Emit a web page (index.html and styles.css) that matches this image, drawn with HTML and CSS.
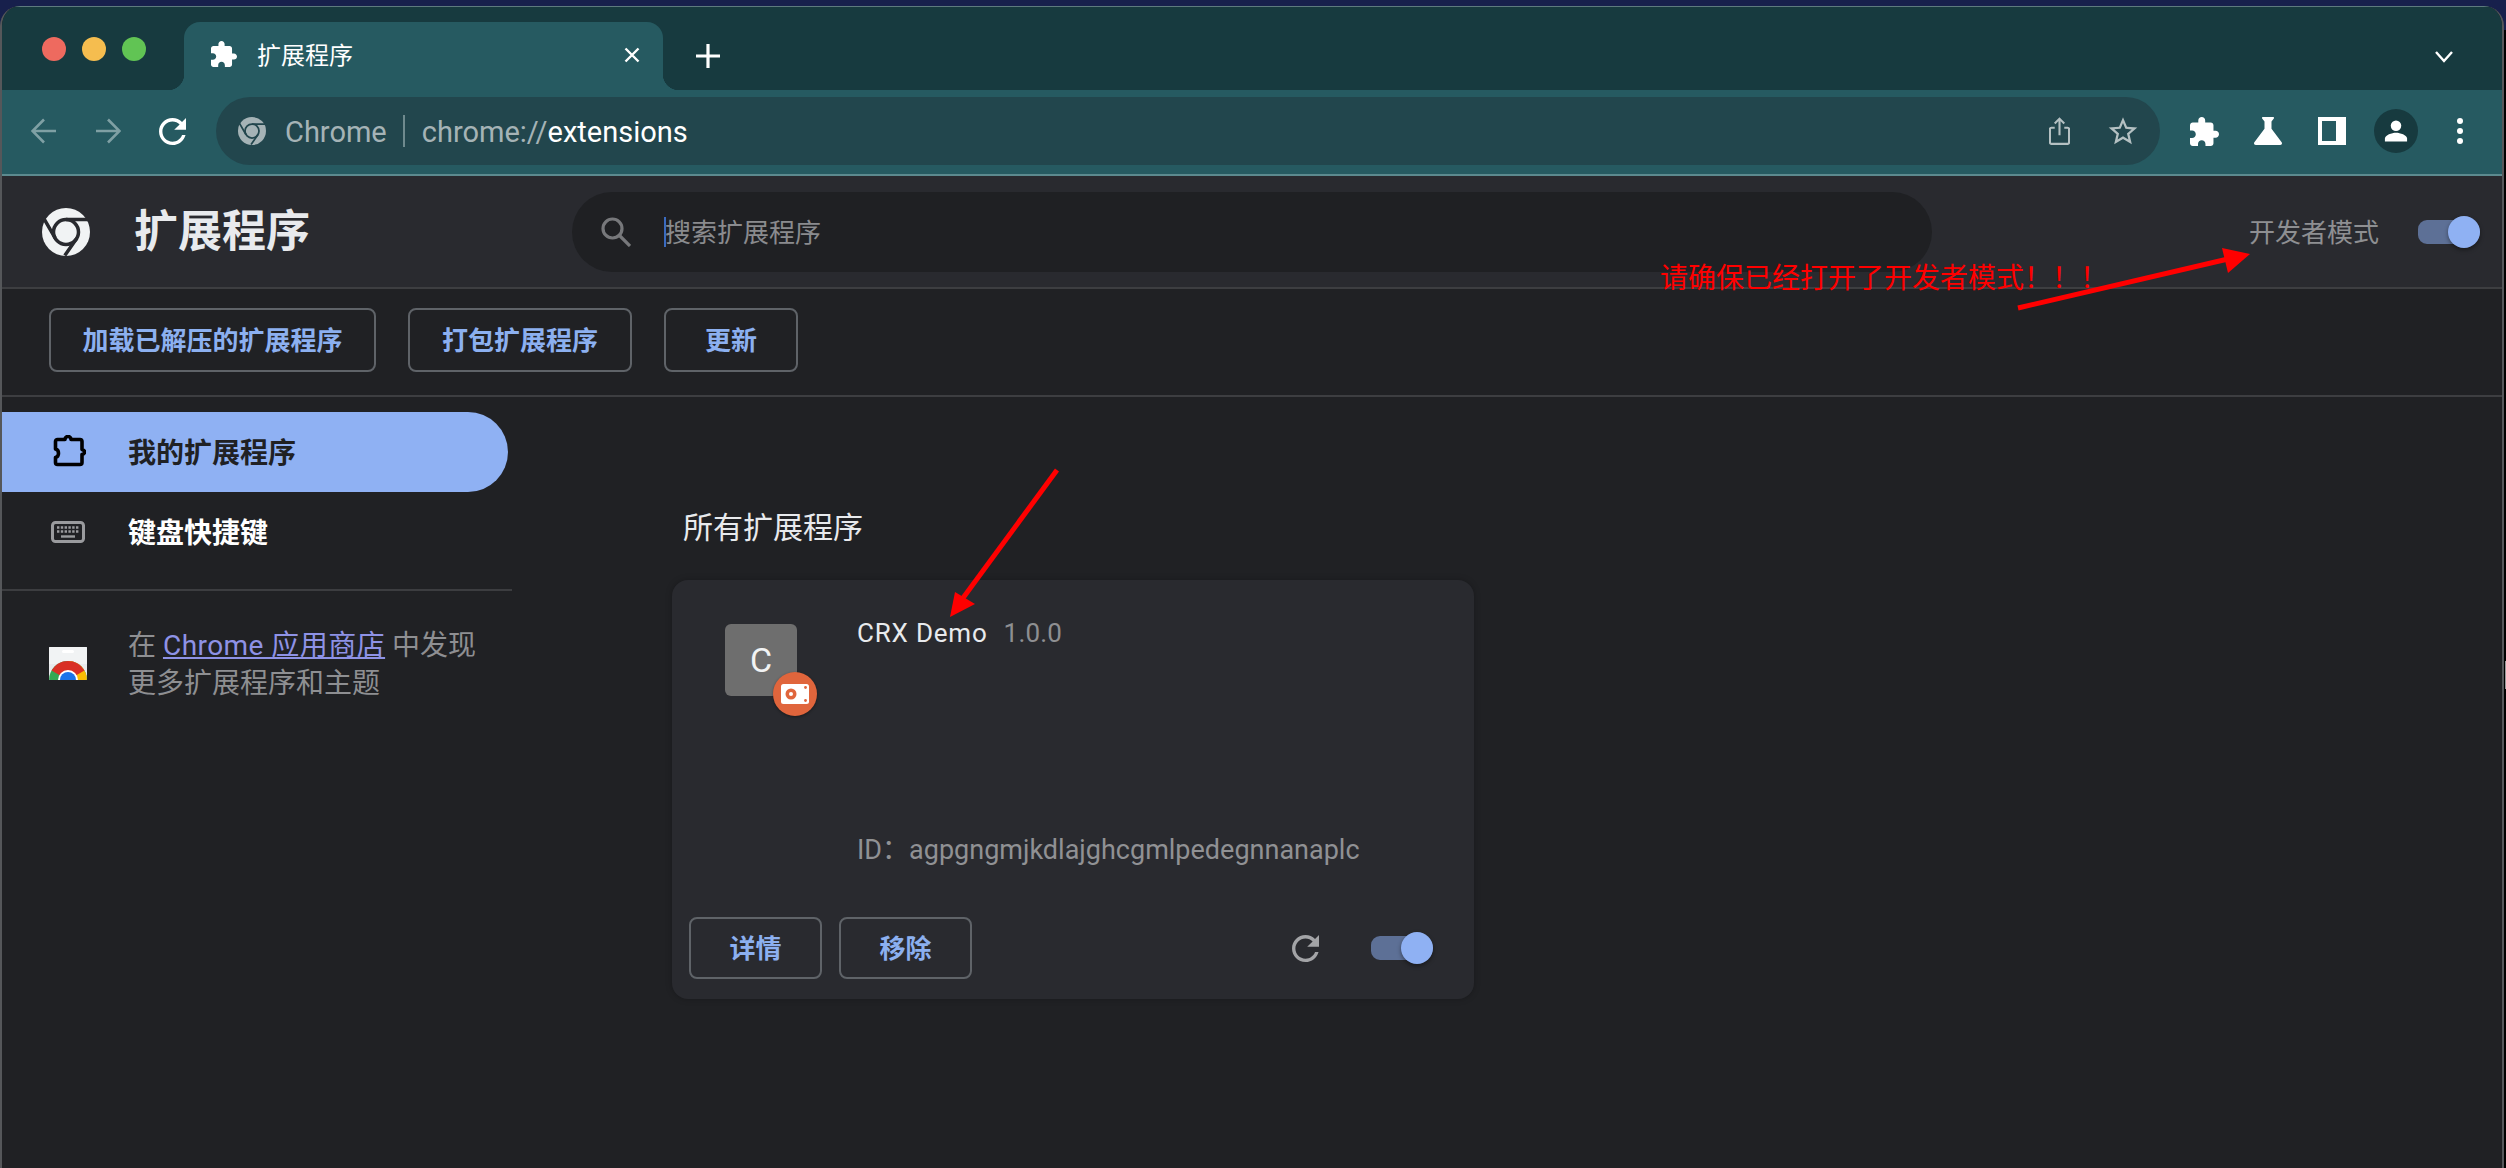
FILE: index.html
```html
<!DOCTYPE html>
<html lang="zh-CN">
<head>
    <meta charset="UTF-8">
    <title>扩展程序</title>
    <link rel="stylesheet" href="styles.css">
</head>
<body>
    <div class="window">
        <!-- 标签栏 -->
        <div class="tabstrip">
            <div class="lights">
                <span class="light red"></span>
                <span class="light yellow"></span>
                <span class="light green"></span>
            </div>
            <div class="tab">
                <svg class="tab-icon" viewBox="2 1 21 21"><path fill="#fff" d="M20.5 11H19V7c0-1.1-.9-2-2-2h-4V3.5C13 2.12 11.88 1 10.5 1S8 2.12 8 3.5V5H4c-1.1 0-1.99.9-1.99 2v3.8H3.5c1.49 0 2.7 1.21 2.7 2.7s-1.21 2.7-2.7 2.7H2V20c0 1.1.9 2 2 2h3.8v-1.5c0-1.49 1.21-2.7 2.7-2.7 1.49 0 2.7 1.21 2.7 2.7V22H17c1.1 0 2-.9 2-2v-4h1.5c1.38 0 2.5-1.12 2.5-2.5S21.88 11 20.5 11z"/></svg>
                <span class="tab-title">扩展程序</span>
                <svg class="tab-close" viewBox="0 0 16 16"><path d="M1.5 1.5l13 13M14.5 1.5l-13 13" stroke="#fff" stroke-width="2.4" fill="none"/></svg>
            </div>
            <svg class="new-tab" viewBox="0 0 24 24"><path d="M12 0v24M0 12h24" stroke="#fff" stroke-width="3.2" stroke-linecap="round" fill="none"/></svg>
            <svg class="tab-menu" viewBox="0 0 18 12"><path d="M1 1l8 9 8-9" stroke="#fff" stroke-width="2.4" fill="none"/></svg>
        </div>

        <!-- 工具栏 -->
        <div class="toolbar">
            <svg class="nav-back" viewBox="0 0 26 26"><path d="M25 13H2M13 1.5L1.5 13 13 24.5" stroke="#7fa0a4" stroke-width="2.6" fill="none"/></svg>
            <svg class="nav-forward" viewBox="0 0 26 26"><path d="M1 13h23M13 1.5L24.500 13 13 24.5" stroke="#7fa0a4" stroke-width="2.6" fill="none"/></svg>
            <svg class="nav-reload" viewBox="4 4 16 16"><path fill="#fff" d="M17.65 6.35C16.2 4.9 14.21 4 12 4c-4.42 0-7.99 3.58-7.99 8s3.57 8 7.99 8c3.73 0 6.84-2.55 7.73-6h-2.08c-.82 2.33-3.04 4-5.650 4-3.31 0-6-2.69-6-6s2.69-6 6-6c1.66 0 3.14.69 4.220 1.78L13 11h7V4l-2.35 2.35z"/></svg>
            <div class="omnibox">
                <svg class="omni-logo" viewBox="0 0 48 48">
                    <circle cx="24" cy="24" r="24" fill="#a5b3b6"/>
                    <circle cx="24" cy="24" r="12" fill="none" stroke="#22464d" stroke-width="3"/>
                    <path d="M24 12h24M13.600 30L1.600 9.200M34.400 30L22.400 47" stroke="#22464d" stroke-width="3" fill="none"/>
                </svg>
                <span class="omni-site">Chrome</span>
                <span class="omni-sep"></span>
                <span class="omni-url">chrome://<b>extensions</b></span>
                <svg class="omni-share" viewBox="0 0 22 30"><path d="M6 11H2.500A1.500 1.500 0 0 0 1 12.500v14A1.500 1.500 0 0 0 2.500 28h17a1.500 1.500 0 0 0 1.500-1.500v-14a1.500 1.500 0 0 0-1.500-1.500H16M11 19V2M6 6.500L11 1.500l5 5" stroke="#b4c0c2" stroke-width="2.200" fill="none"/></svg>
                <svg class="omni-star" viewBox="1.500 2 21 20"><path fill="#b4c0c2" d="M22 9.240l-7.190-.62L12 2 9.190 8.630 2 9.240l5.460 4.730L5.820 21 12 17.270 18.180 21l-1.630-7.030L22 9.240zM12 15.400l-3.760 2.270 1-4.280-3.320-2.880 4.380-.38L12 6.100l1.710 4.040 4.380.38-3.320 2.880 1 4.280L12 15.400z"/></svg>
            </div>
            <svg class="tool-puzzle" viewBox="2 1 21 21"><path fill="#fff" d="M20.5 11H19V7c0-1.100-.9-2-2-2h-4V3.500C13 2.120 11.880 1 10.500 1S8 2.120 8 3.500V5H4c-1.100 0-1.990.9-1.990 2v3.800H3.500c1.490 0 2.700 1.210 2.700 2.700s-1.210 2.700-2.700 2.700H2V20c0 1.100.9 2 2 2h3.800v-1.500c0-1.490 1.210-2.700 2.700-2.700 1.490 0 2.700 1.210 2.700 2.700V22H17c1.100 0 2-.9 2-2v-4h1.500c1.380 0 2.500-1.120 2.500-2.500S21.880 11 20.500 11z"/></svg>
            <svg class="tool-flask" viewBox="4 4 16 16"><path fill="#fff" d="M19.800 18.400L14 10.670V6.500l1.350-1.690c.26-.33.03-.81-.39-.81H9.040c-.42 0-.65.48-.39.81L10 6.500v4.170L4.200 18.400c-.49.66-.02 1.600.8 1.600h14c.82 0 1.290-.94.8-1.600z"/></svg>
            <svg class="tool-panel" viewBox="0 0 28 28"><path fill="#fff" fill-rule="evenodd" d="M0 0h28v28H0zM4 4v20h14V4z"/></svg>
            <div class="avatar">
                <svg viewBox="0 0 24 24"><circle cx="12" cy="7.500" r="4.500" fill="#fff"/><path fill="#fff" d="M2.500 21v-2.500c0-3 6-5 9.500-5s9.500 2 9.500 5V21z"/></svg>
            </div>
            <div class="tool-dots"><span></span><span></span><span></span></div>
        </div>

        <!-- 页面头部 -->
        <div class="ext-header">
            <div class="brand">
                <svg class="brand-logo" viewBox="0 0 48 48">
                    <circle cx="24" cy="24" r="24" fill="#f1f3f4"/>
                    <circle cx="24" cy="24" r="12.500" fill="none" stroke="#292a2f" stroke-width="3.500"/>
                    <path d="M24 11.500h24M13.200 30.200L1.200 9.400M34.800 30.200L22.800 47.500" stroke="#292a2f" stroke-width="3.500" fill="none"/>
                </svg>
                <h1 class="brand-title">扩展程序</h1>
            </div>
            <div class="search">
                <svg class="search-icon" viewBox="0 0 30 30"><circle cx="11.500" cy="11.500" r="9.500" fill="none" stroke="#77787b" stroke-width="3.200"/><path d="M18.500 18.500L29 29" stroke="#77787b" stroke-width="3.200"/></svg>
                <span class="caret"></span>
                <span class="search-text">搜索扩展程序</span>
            </div>
            <span class="dev-label">开发者模式</span>
            <div class="toggle header-toggle"><span class="knob"></span></div>
        </div>

        <div class="action-bar">
            <button class="btn btn-load">加载已解压的扩展程序</button>
            <button class="btn btn-pack">打包扩展程序</button>
            <button class="btn btn-update">更新</button>
        </div>

        <div class="main">
            <div class="sidebar">
                <div class="side-item active">
                    <svg class="side-icon" viewBox="0 0 34 34"><path d="M3.500 6.500A2 2 0 0 1 5.500 4.500H13c0-4 6-4 6 0h9a2 2 0 0 1 2 2V14.500c3.500 1 3.500 4 0 5v8a2 2 0 0 1-2 2H5.500a2 2 0 0 1-2-2v-5c4-1 4-7.500 0-8.500z" fill="none" stroke="#000" stroke-width="3.600" stroke-linejoin="round"/></svg>
                    <span>我的扩展程序</span>
                </div>
                <div class="side-item">
                    <svg class="side-icon kbd" viewBox="0 0 34 22">
                        <rect x="1.500" y="1.500" width="31" height="19" rx="3" fill="none" stroke="#9a9b9e" stroke-width="3"/>
                        <path d="M6 6.500h22M6 10.500h22" stroke="#9a9b9e" stroke-width="2.400" stroke-dasharray="2.400 1.400" fill="none"/>
                        <path d="M10 15.500h14" stroke="#9a9b9e" stroke-width="2.400" fill="none"/>
                    </svg>
                    <span>键盘快捷键</span>
                </div>
                <div class="side-divider"></div>
                <div class="promo">
                    <svg class="promo-icon" viewBox="0 0 38 33">
                        <defs><clipPath id="store"><rect width="38" height="33" rx="1"/></clipPath></defs>
                        <g clip-path="url(#store)">
                            <rect width="38" height="33" fill="#e8eaed"/>
                            <rect width="38" height="17" fill="#f1f3f4"/>
                            <rect x="13" y="3" width="12" height="3" rx="1.500" fill="#fff"/>
                            <circle cx="19" cy="33" r="19" fill="#34a853"/>
                            <path d="M19 33V14a19 19 0 0 1 19 19z" fill="#fbbc04"/>
                            <path d="M2.500 23.500A19 19 0 0 1 35.500 23.500L19 33z" fill="#d93025"/>
                            <circle cx="19" cy="33" r="10" fill="#fff"/>
                            <circle cx="19" cy="33" r="8" fill="#1a73e8"/>
                        </g>
                    </svg>
                    <p class="promo-text">在 <a href="#">Chrome 应用商店</a> 中发现<br>更多扩展程序和主题</p>
                </div>
            </div>

            <div class="content">
                <h2 class="section-title">所有扩展程序</h2>
                <div class="card">
                    <div class="card-top">
                        <div class="ext-icon">
                            C
                            <span class="ext-badge">
                                <svg viewBox="0 0 28 20"><rect width="28" height="20" rx="2.500" fill="#fff"/><circle cx="10" cy="10" r="5.500" fill="#e0653c"/><circle cx="10" cy="10" r="2" fill="#fff"/><circle cx="24.500" cy="3.500" r="1.400" fill="#e0653c"/><circle cx="24.500" cy="16.500" r="1.400" fill="#e0653c"/></svg>
                            </span>
                        </div>
                        <div class="ext-info">
                            <div class="ext-name">CRX Demo<span class="ext-version">1.0.0</span></div>
                            <div class="ext-id">ID：agpgngmjkdlajghcgmlpedegnnanaplc</div>
                        </div>
                    </div>
                    <div class="card-foot">
                        <button class="btn btn-card">详情</button>
                        <button class="btn btn-card">移除</button>
                        <svg class="card-reload" viewBox="4 4 16 16"><path fill="#a3a4a7" d="M17.650 6.350C16.200 4.900 14.210 4 12 4c-4.420 0-7.990 3.580-7.990 8s3.570 8 7.990 8c3.730 0 6.840-2.550 7.730-6h-2.080c-.82 2.330-3.040 4-5.650 4-3.310 0-6-2.690-6-6s2.690-6 6-6c1.660 0 3.140.69 4.220 1.780L13 11h7V4l-2.350 2.350z"/></svg>
                        <div class="toggle card-toggle"><span class="knob"></span></div>
                    </div>
                </div>
            </div>
        </div>
    </div>

    <!-- 截图上的红色标注 -->
    <div class="note">请确保已经打开了开发者模式！！！</div>
    <svg class="arrows" viewBox="0 0 2506 1168">
        <path d="M2018 308L2228 259" stroke="#f00" stroke-width="5"/>
        <path d="M2250 254L2222 248L2228 273z" fill="#f00"/>
        <path d="M1057 470L963 598" stroke="#f00" stroke-width="5"/>
        <path d="M950 617L955 592L975 604z" fill="#f00"/>
    </svg>
    <span class="edge-mark"></span>
</body>
</html>
```

FILE: styles.css
```css
* {
    box-sizing: border-box;
}

html {
    background: linear-gradient(to bottom, #17204c 0, #17204c 30px, #000 30px);
}

body {
    margin: 0;
    width: 2506px;
    height: 1168px;
    overflow: hidden;
    position: relative;
    font-family: Roboto, "Noto Sans CJK SC", sans-serif;
    color: #e8eaed;
}

svg {
    display: block;
    flex: none;
}

.window {
    width: 2504px;
    height: 1162px;
    margin-top: 6px;
    background: #202124;
    border-left: 2px solid #55575a;
    border-right: 2px solid #55575a;
    border-radius: 20px 20px 0 0;
    overflow: hidden;
}

/* tab strip */
.tabstrip {
    height: 84px;
    padding-top: 16px;
    background: #173a3f;
    display: flex;
    box-shadow: inset 0 1px 0 #5d7a7e;
}

.lights {
    display: flex;
    gap: 16px;
    margin: 15px 0 0 40px;
}

.light {
    width: 24px;
    height: 24px;
    border-radius: 50%;
}

.light.red { background: #ee6a5f; }
.light.yellow { background: #f5bd4f; }
.light.green { background: #61c454; }

.tab {
    width: 479px;
    height: 68px;
    margin-left: 38px;
    padding: 0 23px 0 27px;
    background: #265a61;
    border-radius: 16px 16px 0 0;
    display: flex;
    align-items: center;
    position: relative;
}

.tab::before,
.tab::after {
    content: "";
    position: absolute;
    bottom: 0;
    width: 16px;
    height: 16px;
}

.tab::before {
    left: -16px;
    background: radial-gradient(circle at 0 0, #173a3f 16px, #265a61 16.5px);
}

.tab::after {
    right: -16px;
    background: radial-gradient(circle at 100% 0, #173a3f 16px, #265a61 16.5px);
}

.tab-icon {
    width: 26px;
    height: 26px;
    margin-top: -4px;
}

.tab-title {
    margin-left: 20px;
    font-size: 24px;
    line-height: 32px;
    color: #fff;
}

.tab-close {
    width: 16px;
    height: 16px;
    margin-left: auto;
    margin-top: -2px;
}

.new-tab {
    width: 24px;
    height: 24px;
    margin: 22px 0 0 33px;
}

.tab-menu {
    width: 18px;
    height: 12px;
    margin: 29px 49px 0 auto;
}

/* toolbar */
.toolbar {
    height: 86px;
    padding-bottom: 2px;
    background: #265a61;
    border-bottom: 2px solid #5c8a8f;
    display: flex;
    align-items: center;
}

.nav-back { width: 26px; height: 26px; margin-left: 29px; }
.nav-forward { width: 26px; height: 26px; margin-left: 38px; }
.nav-reload { width: 27px; height: 27px; margin-left: 38px; }

.omnibox {
    width: 1944px;
    height: 68px;
    margin-left: 30px;
    padding: 0 22px;
    background: #22464d;
    border-radius: 34px;
    display: flex;
    align-items: center;
    flex: none;
}

.omni-logo {
    width: 28px;
    height: 28px;
}

.omni-site {
    margin: 2px 0 0 19px;
    font-size: 29px;
    color: #a5b3b6;
}

.omni-sep {
    width: 2px;
    height: 32px;
    margin-left: 16px;
    background: #6f8a8e;
}

.omni-url {
    margin: 2px 0 0 17px;
    font-size: 29px;
    color: #a5b3b6;
}

.omni-url b {
    font-weight: 400;
    color: #fff;
}

.omni-share {
    width: 21px;
    height: 29px;
    margin-left: auto;
}

.omni-star {
    width: 30px;
    height: 29px;
    margin-left: 38px;
}

.tool-puzzle { width: 29px; height: 29px; margin-left: 30px; }
.tool-flask { width: 28px; height: 28px; margin-left: 35px; }
.tool-panel { width: 28px; height: 28px; margin-left: 36px; }

.avatar {
    width: 44px;
    height: 44px;
    margin-left: 28px;
    padding: 8px;
    border-radius: 50%;
    background: #173a3f;
}

.tool-dots {
    margin-left: 39px;
    display: flex;
    flex-direction: column;
    gap: 4px;
}

.tool-dots span {
    width: 6px;
    height: 6px;
    border-radius: 50%;
    background: #fff;
}

/* page header */
.ext-header {
    height: 113px;
    background: #292a2f;
    border-bottom: 2px solid #3d3e41;
    display: flex;
    align-items: center;
}

.brand {
    width: 570px;
    padding-left: 40px;
    display: flex;
    align-items: center;
    flex: none;
}

.brand-logo {
    width: 48px;
    height: 48px;
}

.brand-title {
    margin: 0 0 0 44px;
    font-size: 44px;
    line-height: 56px;
    font-weight: 700;
    color: #e8eaed;
}

.search {
    width: 1360px;
    height: 80px;
    padding-left: 29px;
    background: #1f2023;
    border-radius: 40px;
    display: flex;
    align-items: center;
}

.search-icon {
    width: 30px;
    height: 30px;
}

.caret {
    width: 2px;
    height: 30px;
    margin-left: 33px;
    background: #3a6bc0;
}

.search-text {
    margin: -3px 0 0 -1px;
    font-size: 26px;
    color: #8a8b8e;
}

.dev-label {
    margin: -2px 0 0 auto;
    font-size: 26px;
    color: #8e8f92;
}

.toggle {
    width: 62px;
    height: 24px;
    position: relative;
    background: #5d7096;
    border-radius: 12px 16px 16px 12px;
}

.knob {
    position: absolute;
    right: 0;
    top: -4px;
    width: 32px;
    height: 32px;
    border-radius: 50%;
    background: #8fb1f3;
    box-shadow: 0 2px 4px rgba(0, 0, 0, .4);
}

.header-toggle {
    margin: 0 22px 0 39px;
}

/* action bar */
.action-bar {
    height: 108px;
    padding: 19px 0 0 47px;
    border-bottom: 2px solid #3d3e41;
    display: flex;
    gap: 32px;
}

.btn {
    height: 64px;
    background: none;
    border: 2px solid #5f6368;
    border-radius: 8px;
    font-family: inherit;
    font-size: 26px;
    font-weight: 600;
    color: #8cb0f0;
    padding: 0 0 3px;
}

.btn-load { width: 327px; }
.btn-pack { width: 224px; }
.btn-update { width: 134px; }

/* sidebar */
.main {
    display: flex;
}

.sidebar {
    width: 510px;
    padding-top: 15px;
    flex: none;
}

.side-item {
    width: 506px;
    height: 80px;
    display: flex;
    align-items: center;
    border-radius: 0 40px 40px 0;
    font-size: 28px;
    font-weight: 700;
    color: #fff;
    position: relative;
}

.side-item.active {
    background: #8fb1f3;
    color: #202124;
    font-weight: 600;
}

.side-icon {
    width: 34px;
    height: 34px;
    margin: 0 42px 0 50px;
}

.side-icon.kbd {
    height: 22px;
    margin: 0 43px 0 49px;
}

.side-item span {
    margin-top: -2px;
}

.side-divider {
    height: 2px;
    margin-top: 17px;
    background: #3c3d40;
}

.promo {
    padding: 36px 0 0 47px;
    display: flex;
}

.promo-icon {
    width: 38px;
    height: 33px;
    margin-top: 20px;
}

.promo-text {
    margin: 0 0 0 41px;
    font-size: 28px;
    line-height: 38px;
    color: #8e8f92;
    white-space: nowrap;
}

.promo-text a {
    letter-spacing: .45px;
    color: #8e92e6;
}

/* cards */
.content {
    padding: 111px 0 0 160px;
}

.section-title {
    margin: 0 0 32px 11px;
    font-size: 30px;
    line-height: 40px;
    font-weight: 400;
    color: #e8eaed;
}

.card {
    width: 802px;
    height: 419px;
    padding-top: 44px;
    background: #292a2f;
    border-radius: 16px;
    box-shadow: 0 0 6px rgba(0, 0, 0, .25);
    display: flex;
    flex-direction: column;
}

.card-top {
    display: flex;
    padding-left: 53px;
}

.ext-icon {
    width: 72px;
    height: 72px;
    background: #6e6e6e;
    border-radius: 6px;
    font-size: 34px;
    color: #f1f3f4;
    display: flex;
    align-items: center;
    justify-content: center;
    position: relative;
}

.ext-badge {
    position: absolute;
    left: 48px;
    top: 48px;
    width: 44px;
    height: 44px;
    border-radius: 50%;
    background: #e0653c;
    box-shadow: 0 1px 3px rgba(0, 0, 0, .4);
    display: flex;
    align-items: center;
    justify-content: center;
}

.ext-badge svg {
    width: 28px;
    height: 20px;
}

.ext-info {
    height: 242px;
    margin-left: 60px;
    display: flex;
    flex-direction: column;
    justify-content: space-between;
}

.ext-name {
    font-size: 26px;
    line-height: 18px;
    letter-spacing: .8px;
    color: #e8eaed;
}

.ext-version {
    margin-left: 16px;
    letter-spacing: .2px;
    color: #8e8f92;
}

.ext-id {
    font-size: 27px;
    line-height: 32px;
    color: #909194;
}

.card-foot {
    margin-top: auto;
    padding: 0 41px 20px 17px;
    display: flex;
    align-items: center;
    gap: 17px;
}

.btn-card {
    width: 133px;
    height: 62px;
}

.card-reload {
    width: 27px;
    height: 27px;
    margin-left: auto;
}

.card-toggle {
    margin-left: 35px;
}

/* red annotations */
.note {
    position: absolute;
    left: 1660px;
    top: 259px;
    font-size: 28px;
    line-height: 40px;
    color: #f00;
    white-space: nowrap;
}

.arrows {
    position: absolute;
    left: 0;
    top: 0;
    width: 2506px;
    height: 1168px;
}

.edge-mark {
    position: absolute;
    left: 2505px;
    top: 661px;
    width: 1px;
    height: 28px;
    background: #999;
}
```
